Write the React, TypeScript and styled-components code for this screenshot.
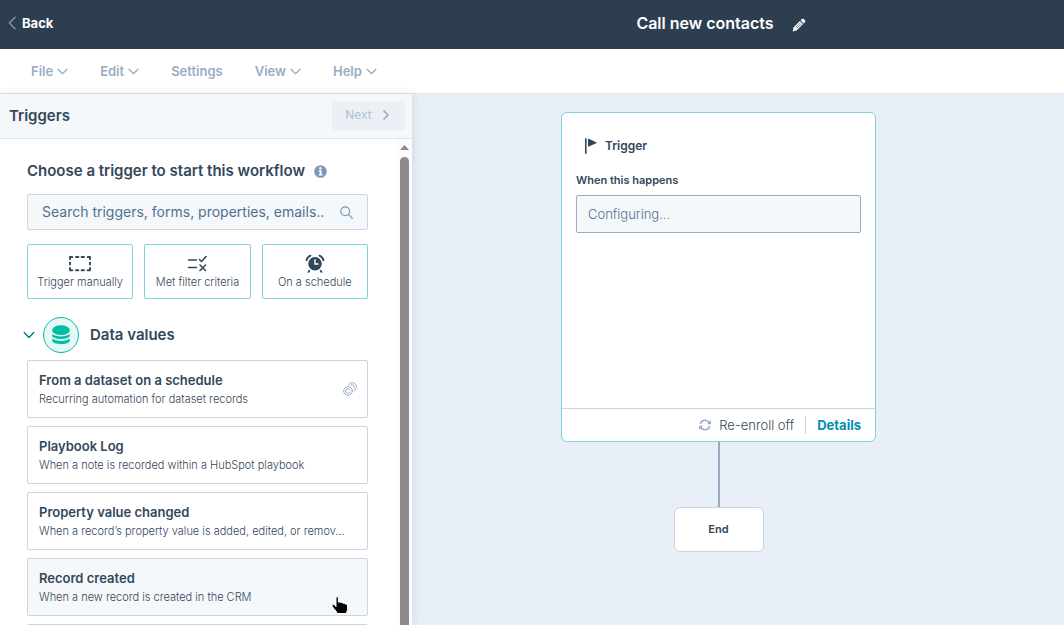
import React from "react";
import styled, { createGlobalStyle, css } from "styled-components";

const color = {
  navy: "#2d3e50",
  text: "#33475b",
  slate: "#516f90",
  muted: "#99acc2",
  steel: "#7c98b6",
  line: "#cbd6e2",
  soft: "#f5f8fa",
  canvas: "#e8eff6",
  aqua: "#7fd1de",
  teal: "#0091ae",
  green: "#00bda5",
};

const GlobalStyle = createGlobalStyle`
  *, *::before, *::after { box-sizing: border-box; }
  body { margin: 0; font-family: Inter, "Open Sans", sans-serif; color: ${color.text}; background: ${color.canvas}; }
  button, input { font-family: inherit; color: inherit; margin: 0; }
  button { cursor: pointer; padding: 0; border: 0; background: none; }
  h1, h2, h3, p { margin: 0; }
  svg { display: block; flex: none; }
`;

const Page = styled.div`
  display: flex;
  flex-direction: column;
  height: 100vh;
  overflow: hidden;
`;

const TopBar = styled.header`
  display: grid;
  grid-template-columns: 412px 1fr;
  align-items: center;
  flex: none;
  height: 49px;
  padding: 0 34px 3px 0;
  background: ${color.navy};
  color: #fff;
`;

const BackLink = styled.a`
  display: flex;
  align-items: center;
  gap: 6px;
  justify-self: start;
  padding: 0 8px;
  color: #fff;
  font-size: 13px;
  line-height: 20px;
  font-weight: 700;
  text-decoration: none;
`;

const TitleGroup = styled.div`
  display: flex;
  align-items: center;
  justify-content: center;
  gap: 18px;
`;

const Title = styled.h1`
  font-size: 16px;
  line-height: 24px;
  font-weight: 600;
  white-space: nowrap;
`;

const EditButton = styled.button`
  padding-top: 4px;
`;

const MenuBar = styled.nav`
  display: flex;
  align-items: center;
  flex: none;
  gap: 32px;
  height: 45px;
  padding-left: 31px;
  background: #fff;
  border-bottom: 1px solid #dfe3eb;
`;

const MenuButton = styled.button`
  display: flex;
  align-items: center;
  gap: 4px;
  color: ${color.muted};
  font-size: 13px;
  line-height: 20px;
  font-weight: 600;
`;

const Workspace = styled.div`
  display: flex;
  flex: 1;
  min-height: 0;
`;

const Panel = styled.aside`
  position: relative;
  display: flex;
  flex-direction: column;
  flex: none;
  width: 412px;
  background: #fff;
  box-shadow: 1px 0 8px rgba(45, 62, 80, 0.12);
`;

const PanelHeader = styled.div`
  display: flex;
  align-items: center;
  justify-content: space-between;
  flex: none;
  height: 45px;
  padding: 0 7px 2px 9px;
  background: ${color.soft};
  border-bottom: 1px solid #dfe3eb;
`;

const PanelTitle = styled.h2`
  padding-top: 2px;
  font-size: 15px;
  line-height: 24px;
  font-weight: 600;
`;

const NextButton = styled.button`
  display: flex;
  align-items: center;
  justify-content: center;
  gap: 10px;
  width: 73px;
  height: 29px;
  padding-right: 2px;
  border-radius: 3px;
  background: #eaf0f6;
  color: #b0c1d4;
  font-size: 12px;
  line-height: 18px;
`;

const PanelBody = styled.div`
  display: flex;
  flex: 1;
  min-height: 0;
`;

const PanelContent = styled.div`
  flex: 1;
  min-width: 0;
  padding: 20px 28px 0 27px;
  overflow: hidden;
`;

const ScrollTrack = styled.div`
  display: flex;
  flex-direction: column;
  align-items: center;
  gap: 7px;
  flex: none;
  width: 16px;
  padding-top: 6px;
  background: #fcfcfc;
`;

const ScrollThumb = styled.div`
  flex: 1;
  width: 9px;
  border-radius: 5px 5px 0 0;
  background: #8b8b8b;
`;

const SectionTitle = styled.h3`
  display: flex;
  align-items: center;
  gap: 9px;
  font-size: 15px;
  line-height: 24px;
  font-weight: 600;
  white-space: nowrap;
`;

const SearchBox = styled.label`
  display: flex;
  align-items: center;
  gap: 10px;
  height: 36px;
  margin-top: 11px;
  padding: 0 14px;
  border: 1px solid ${color.line};
  border-radius: 2px;
  background: ${color.soft};
`;

const SearchInput = styled.input`
  flex: 1;
  min-width: 0;
  padding: 0;
  border: 0;
  outline: 0;
  background: transparent;
  font-size: 14px;
  line-height: 24px;
  &::placeholder { color: ${color.slate}; opacity: 1; }
`;

const TileRow = styled.div`
  display: grid;
  grid-template-columns: repeat(3, 1fr);
  gap: 11px;
  margin-top: 14px;
`;

const Tile = styled.button`
  display: flex;
  flex-direction: column;
  align-items: center;
  gap: 1px;
  height: 55px;
  padding-top: 8px;
  border: 1px solid ${color.aqua};
  border-radius: 2px;
  background: #fff;
  font-size: 11px;
  line-height: 16px;
  font-weight: 300;
  white-space: nowrap;
`;

const GroupToggle = styled.button`
  display: flex;
  align-items: center;
  margin: 18px 0 7px -4px;
  font-size: 15px;
  line-height: 24px;
  font-weight: 600;
`;

const GroupIcon = styled.span`
  display: grid;
  place-items: center;
  width: 36px;
  height: 36px;
  margin: 0 11px 0 8px;
  border: 1px solid ${color.green};
  border-radius: 50%;
  background: #e5f8f6;
`;

const CardList = styled.div`
  display: flex;
  flex-direction: column;
  gap: 8px;
`;

const Card = styled.button<{ $hovered?: boolean }>`
  position: relative;
  display: flex;
  align-items: center;
  justify-content: space-between;
  flex: none;
  width: 100%;
  height: 58px;
  padding: 0 10px 1px 11px;
  border: 1px solid ${color.line};
  border-radius: 2px;
  background: #fff;
  text-align: left;
  ${(p) => p.$hovered && css`background: ${color.soft};`}
`;

const CardText = styled.span`
  display: flex;
  flex-direction: column;
  min-width: 0;
`;

const CardTitle = styled.span`
  font-size: 13px;
  line-height: 20px;
  font-weight: 600;
`;

const CardDescription = styled.span`
  font-size: 11px;
  line-height: 18px;
  font-weight: 300;
  white-space: nowrap;
`;

const Pointer = styled.span`
  position: absolute;
  right: 18px;
  bottom: 0;
`;

const Canvas = styled.main`
  display: flex;
  flex-direction: column;
  align-items: center;
  flex: 1;
  min-width: 0;
  padding: 18px 39px 0 0;
  background: ${color.canvas};
`;

const TriggerCard = styled.section`
  display: flex;
  flex-direction: column;
  width: 315px;
  height: 330px;
  flex: none;
  border: 1px solid ${color.aqua};
  border-radius: 6px;
  background: #fff;
`;

const TriggerBody = styled.div`
  flex: 1;
  padding: 24px 14px 0;
`;

const TriggerHeading = styled.h2`
  display: flex;
  align-items: center;
  gap: 8px;
  padding-left: 8px;
  font-size: 12px;
  line-height: 18px;
  font-weight: 600;
`;

const FieldLabel = styled.label`
  display: block;
  margin: 16px 0 6px;
  font-size: 11px;
  line-height: 18px;
  font-weight: 600;
`;

const Field = styled.input`
  display: block;
  width: 100%;
  height: 38px;
  padding: 0 11px 1px;
  border: 1px solid ${color.muted};
  border-radius: 2px;
  outline: 0;
  background: ${color.soft};
  font-size: 13px;
  font-weight: 300;
  &::placeholder { color: ${color.slate}; opacity: 1; }
`;

const TriggerFooter = styled.div`
  display: flex;
  align-items: center;
  justify-content: flex-end;
  gap: 11px;
  height: 33px;
  padding: 0 14px 1px;
  border-top: 1px solid ${color.line};
  font-size: 13px;
  line-height: 18px;
  font-weight: 300;
`;

const Enrollment = styled.span`
  display: flex;
  align-items: center;
  gap: 8px;
`;

const Divider = styled.span`
  width: 1px;
  height: 18px;
  background: ${color.line};
`;

const DetailsButton = styled.button`
  color: ${color.teal};
  font-size: 13px;
  line-height: 18px;
  font-weight: 700;
`;

const Connector = styled.div`
  flex: none;
  width: 2px;
  height: 65px;
  background: ${color.muted};
`;

const EndNode = styled.div`
  display: grid;
  place-items: center;
  flex: none;
  width: 90px;
  height: 45px;
  padding-bottom: 2px;
  border: 1px solid ${color.line};
  border-radius: 6px;
  background: #fff;
  font-size: 11px;
  line-height: 18px;
  font-weight: 600;
`;

const Chevron = ({ stroke = color.muted, size = 11 }: { stroke?: string; size?: number }) => (
  <svg width={size} height={size} viewBox="0 0 12 12" fill="none" stroke={stroke} strokeWidth="1.4" strokeLinecap="round" strokeLinejoin="round">
    <path d="M1.2 3.6 6 8.4l4.8-4.8" />
  </svg>
);

const BackIcon = () => (
  <svg width="8" height="14" viewBox="0 0 8 14" fill="none" stroke={color.steel} strokeWidth="1.4" strokeLinecap="round" strokeLinejoin="round">
    <path d="M7 1.2 1.4 7 7 12.8" />
  </svg>
);

const NextIcon = () => (
  <svg width="8" height="10" viewBox="0 0 8 10" fill="none" stroke={color.muted} strokeWidth="1.5" strokeLinecap="round" strokeLinejoin="round">
    <path d="M2 .9 6 5 2 9.1" />
  </svg>
);

const PencilIcon = () => (
  <svg width="14" height="14" viewBox="0 0 14 14">
    <path fill="#fff" d="M9.8 1.1c.6-.6 1.4-.6 2 0l1.1 1.1c.6.6.6 1.4 0 2l-1.2 1.2-3.1-3.1zM7.9 3 11 6.1 4.5 12.6.7 13.4 1.4 9.5z" />
    <path d="M8.7 4.5 3.6 9.6M9.7 5.5 4.6 10.6" stroke={color.navy} strokeWidth=".6" fill="none" />
    <path d="m1.8 11.3 1 1" stroke={color.navy} strokeWidth=".6" />
  </svg>
);

const InfoIcon = () => (
  <svg width="13" height="13" viewBox="0 0 13 13">
    <circle cx="6.5" cy="6.5" r="6.3" fill={color.steel} />
    <circle cx="6.4" cy="3.2" r="1.2" fill="#fff" />
    <path d="M4.7 5.2h2.8v4H8.500v1.300H4.700V9.200h.9V6.500h-.9z" fill="#fff" />
  </svg>
);

const SearchIcon = () => (
  <svg width="13" height="13" viewBox="0 0 13 13" fill="none" stroke={color.steel} strokeWidth="1.2" strokeLinecap="round">
    <circle cx="5.2" cy="5.2" r="4.4" />
    <path d="m8.5 8.5 3.8 3.8" />
  </svg>
);

const MarqueeIcon = () => (
  <svg width="22" height="20" viewBox="0 0 22 20" fill="none" stroke={color.text} strokeWidth="1.9" strokeLinecap="round" strokeLinejoin="round">
    <path d="M1 6V4h2.300M18.700 4H21v2M21 15v2.300h-2.300M3.300 17.300H1V15M7 4h2.400M12.600 4H15M7 17.300h2.400M12.600 17.300H15M1 9.500v2M21 9.500v2" />
  </svg>
);

const FilterIcon = () => (
  <svg width="20" height="20" viewBox="0 0 20 20" fill="none" stroke={color.text} strokeWidth="1.6" strokeLinecap="round" strokeLinejoin="round">
    <path d="M1.500 7h8M1.500 14.500h8M12.500 6.500l2 2L19 3.500M13 12l5.500 5.500M18.500 12 13 17.500" />
  </svg>
);

const AlarmIcon = () => (
  <svg width="20" height="20" viewBox="0 0 20 20" fill="none" strokeLinecap="round">
    <circle cx="10" cy="10.8" r="6.8" fill={color.text} />
    <path d="M10 6.800v4.200h3" stroke="#fff" strokeWidth="1.400" />
    <path d="M1.500 7.200Q2.500 3.800 5.500 2.700M18.500 7.200Q17.500 3.800 14.500 2.700" stroke={color.text} strokeWidth="1.900" />
    <path d="m4.300 17.700-.8 1.200M15.700 17.700l.8 1.200" stroke={color.text} strokeWidth="1.800" />
  </svg>
);

const DatabaseIcon = () => (
  <svg width="18" height="20" viewBox="0 0 18 20" fill={color.green}>
    <ellipse cx="9" cy="5.2" rx="8.8" ry="4.9" />
    <path d="M.2 9c3.500 3.200 14.100 3.200 17.600 0v1.200c0 5-17.600 5-17.600 0zM.2 13.600c3.500 3.200 14.100 3.200 17.600 0v1.700c0 5.200-17.600 5.200-17.600 0z" />
  </svg>
);

const CreditsIcon = () => (
  <svg width="14" height="14" viewBox="0 0 14 14" fill="none" stroke={color.muted} strokeWidth="1" strokeLinecap="round">
    <circle cx="5" cy="9" r="4.3" />
    <path d="M6.8 7.7A2.3 2.3 0 1 0 6.8 10.4" />
    <path d="M5.5 2.9A4.2 4.2 0 1 1 10.9 8.6" />
    <path d="M8 2.9A2.3 2.3 0 0 1 11 6" />
  </svg>
);

const FlagIcon = () => (
  <svg width="13" height="16" viewBox="0 0 13 16" fill={color.text}>
    <rect x="1" y="0" width="1.6" height="16" rx=".8" />
    <path d="M4 1.3c0-.5.4-.7.8-.5l7.400 3.500c.5.300.5.700 0 .9L4.800 8.500c-.4.200-.8 0-.8-.500z" />
  </svg>
);

const RefreshIcon = () => (
  <svg width="12" height="12" viewBox="0 0 12 12" fill="none" stroke={color.muted} strokeWidth="1.6">
    <path d="M1.300 4.800A4.900 4.900 0 0 1 10.300 3.800M10.700 7.200A4.900 4.900 0 0 1 1.700 8.200" />
    <path d="M11.900 1.300v4H8zM.1 10.700v-4H4z" fill={color.muted} stroke="none" />
  </svg>
);

const HandIcon = () => (
  <svg width="18" height="19" viewBox="0 0 18 19">
    <path
      d="M5 1.800c0-1.500 2.400-1.500 2.400 0v4.400c.7-.5 2-.4 2.400.5.700-.4 2-.2 2.400.7.800-.3 2-.1 2.300.8.900-.1 2 .3 2 1.400v4.200c0 1.300-1.100 2-1.100 3.700H6.200C5.800 15.300 2.600 13 1.200 10.200c-.8-1.600 1.200-2.600 2.400-1.200L5 10.600z"
      fill="#000"
      stroke="#fff"
      strokeWidth="1"
      strokeLinejoin="round"
    />
  </svg>
);

const ScrollArrow = () => (
  <svg width="9" height="5" viewBox="0 0 9 5" fill="#8b8b8b">
    <path d="M4.500 0 9 5H0z" />
  </svg>
);

const menu = [
  { label: "File", opens: true },
  { label: "Edit", opens: true },
  { label: "Settings", opens: false },
  { label: "View", opens: true },
  { label: "Help", opens: true },
];

const quickTriggers = [
  { label: "Trigger manually", icon: <MarqueeIcon /> },
  { label: "Met filter criteria", icon: <FilterIcon /> },
  { label: "On a schedule", icon: <AlarmIcon /> },
];

const dataTriggers = [
  { title: "From a dataset on a schedule", description: "Recurring automation for dataset records", credits: true },
  { title: "Playbook Log", description: "When a note is recorded within a HubSpot playbook" },
  { title: "Property value changed", description: "When a record’s property value is added, edited, or remov..." },
  { title: "Record created", description: "When a new record is created in the CRM", hovered: true },
];

export default function App() {
  return (
    <Page>
      <GlobalStyle />
      <TopBar>
        <BackLink href="#"><BackIcon />Back</BackLink>
        <TitleGroup>
          <Title>Call new contacts</Title>
          <EditButton type="button" aria-label="Edit name"><PencilIcon /></EditButton>
        </TitleGroup>
      </TopBar>
      <MenuBar>
        {menu.map((item) => (
          <MenuButton key={item.label} type="button">
            {item.label}
            {item.opens && <Chevron />}
          </MenuButton>
        ))}
      </MenuBar>
      <Workspace>
        <Panel>
          <PanelHeader>
            <PanelTitle>Triggers</PanelTitle>
            <NextButton type="button">Next<NextIcon /></NextButton>
          </PanelHeader>
          <PanelBody>
            <PanelContent>
              <SectionTitle>Choose a trigger to start this workflow<InfoIcon /></SectionTitle>
              <SearchBox>
                <SearchInput type="text" aria-label="Search triggers" placeholder="Search triggers, forms, properties, emails.." />
                <SearchIcon />
              </SearchBox>
              <TileRow>
                {quickTriggers.map((tile) => (
                  <Tile key={tile.label} type="button">{tile.icon}{tile.label}</Tile>
                ))}
              </TileRow>
              <GroupToggle type="button" aria-expanded="true">
                <Chevron stroke="#007a8c" size={12} />
                <GroupIcon><DatabaseIcon /></GroupIcon>
                Data values
              </GroupToggle>
              <CardList>
                {dataTriggers.map((item) => (
                  <Card key={item.title} type="button" $hovered={item.hovered}>
                    <CardText>
                      <CardTitle>{item.title}</CardTitle>
                      <CardDescription>{item.description}</CardDescription>
                    </CardText>
                    {item.credits && <CreditsIcon />}
                    {item.hovered && <Pointer><HandIcon /></Pointer>}
                  </Card>
                ))}
                <Card type="button" aria-label="More triggers" />
              </CardList>
            </PanelContent>
            <ScrollTrack><ScrollArrow /><ScrollThumb /></ScrollTrack>
          </PanelBody>
        </Panel>
        <Canvas>
          <TriggerCard>
            <TriggerBody>
              <TriggerHeading><FlagIcon />Trigger</TriggerHeading>
              <FieldLabel htmlFor="trigger-condition">When this happens</FieldLabel>
              <Field id="trigger-condition" readOnly placeholder="Configuring..." />
            </TriggerBody>
            <TriggerFooter>
              <Enrollment><RefreshIcon />Re-enroll off</Enrollment>
              <Divider />
              <DetailsButton type="button">Details</DetailsButton>
            </TriggerFooter>
          </TriggerCard>
          <Connector />
          <EndNode>End</EndNode>
        </Canvas>
      </Workspace>
    </Page>
  );
}
